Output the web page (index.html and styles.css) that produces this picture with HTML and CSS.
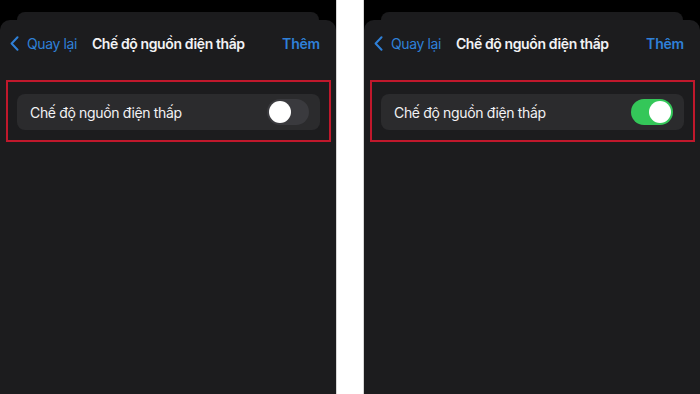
FILE: index.html
```html
<!DOCTYPE html>
<html lang="vi">
<head>
<meta charset="utf-8">
<title>Chế độ nguồn điện thấp</title>
<link rel="stylesheet" href="styles.css">
</head>
<body>
<div class="stage">
  <section class="phone">
    <div class="back-card"></div>
    <div class="sheet">
      <nav class="nav">
        <span class="back">
          <svg class="chev" width="9" height="15" viewBox="0 0 9 15"><path d="M7.5 1.2 L1.6 7.5 L7.5 13.8" fill="none" stroke="currentColor" stroke-width="2" stroke-linecap="round" stroke-linejoin="round"/></svg>
          <span class="back-label">Quay lại</span>
        </span>
        <span class="title">Chế độ nguồn điện thấp</span>
        <span class="more">Thêm</span>
      </nav>
      <div class="highlight">
        <div class="row">
          <span class="row-label">Chế độ nguồn điện thấp</span>
          <span class="toggle"><span class="knob"></span></span>
        </div>
      </div>
    </div>
  </section>
  <div class="divider"></div>
  <section class="phone">
    <div class="back-card"></div>
    <div class="sheet">
      <nav class="nav">
        <span class="back">
          <svg class="chev" width="9" height="15" viewBox="0 0 9 15"><path d="M7.5 1.2 L1.6 7.5 L7.5 13.8" fill="none" stroke="currentColor" stroke-width="2" stroke-linecap="round" stroke-linejoin="round"/></svg>
          <span class="back-label">Quay lại</span>
        </span>
        <span class="title">Chế độ nguồn điện thấp</span>
        <span class="more">Thêm</span>
      </nav>
      <div class="highlight">
        <div class="row">
          <span class="row-label">Chế độ nguồn điện thấp</span>
          <span class="toggle on"><span class="knob"></span></span>
        </div>
      </div>
    </div>
  </section>
</div>
</body>
</html>
```

FILE: styles.css
```css
* { box-sizing: border-box; }
html, body { margin: 0; padding: 0; background: #ffffff; }
body {
  font-family: Inter, "Noto Sans", "Liberation Sans", sans-serif;
  width: 700px;
  height: 394px;
  overflow: hidden;
}
.stage {
  display: flex;
  height: 394px;
}
.phone {
  width: 336px;
  height: 394px;
  background: #000000;
  display: flex;
  flex-direction: column;
}
.divider {
  width: 28px;
  background: #ffffff;
  border-left: 1px solid #d6d6d6;
  border-right: 1px solid #d6d6d6;
}
.back-card {
  height: 8px;
  margin: 12px 17px 0 17px;
  background: #1b1b1d;
  border-radius: 10px 10px 0 0;
}
.sheet {
  flex: 1;
  background: #1c1c1e;
  border-radius: 10px 10px 0 0;
  display: flex;
  flex-direction: column;
}
.nav {
  height: 46px;
  display: flex;
  align-items: center;
  padding: 0 16px 0 10px;
  font-size: 14px;
}
.back {
  display: flex;
  align-items: center;
  color: #2f80d8;
}
.chev { display: block; margin-right: 8px; }
.back-label { letter-spacing: -0.4px; }
.title {
  margin-left: 15px;
  color: #f2f2f4;
  font-weight: 600;
  letter-spacing: -0.4px;
}
.more {
  margin-left: auto;
  color: #2f80d8;
  font-weight: 600;
  letter-spacing: -0.2px;
}
.highlight {
  margin: 14px 5px 0 6px;
  border: 2px solid #c0182c;
  padding: 12px 9px 10px 9px;
}
.row {
  height: 36px;
  background: #2b2b2d;
  border-radius: 8px;
  display: flex;
  align-items: center;
  justify-content: space-between;
  padding: 0 11px 0 13px;
}
.row-label {
  color: #f2f2f4;
  font-size: 14px;
  letter-spacing: -0.35px;
}
.toggle {
  width: 42px;
  height: 26px;
  border-radius: 13px;
  background: #3a3a3e;
  padding: 2px;
  display: flex;
}
.toggle.on {
  background: #34c759;
  justify-content: flex-end;
}
.knob {
  width: 22px;
  height: 22px;
  border-radius: 50%;
  background: #ffffff;
}
```
